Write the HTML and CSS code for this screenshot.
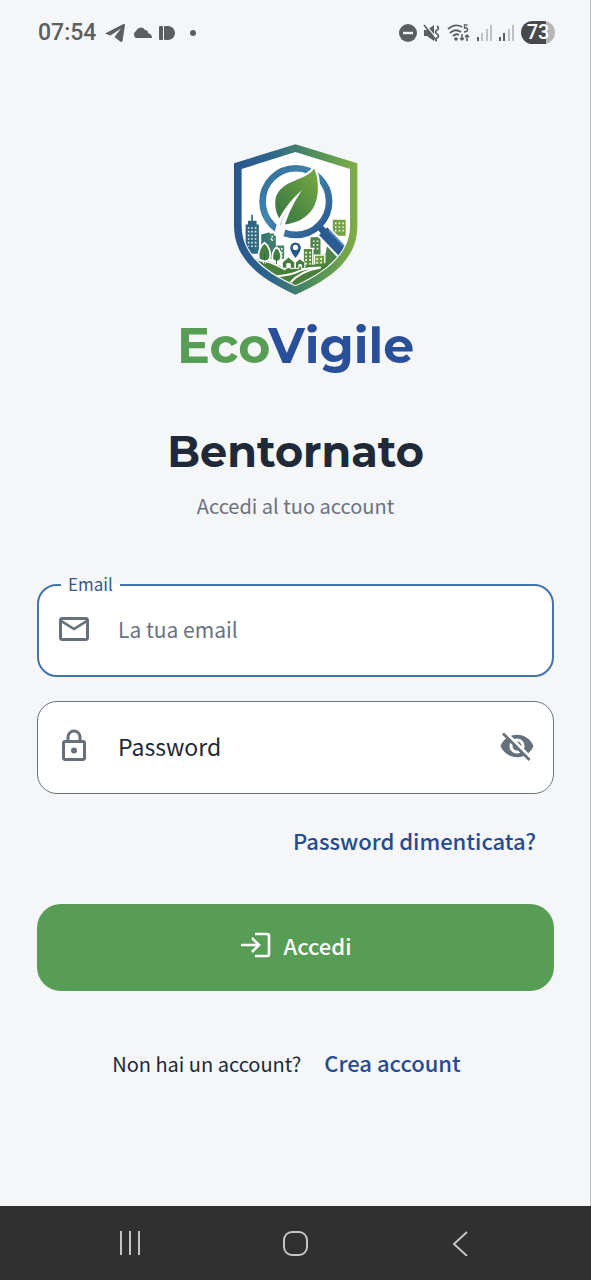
FILE: index.html
```html
<!DOCTYPE html>
<html lang="it">
<head>
    <meta charset="UTF-8">
    <meta name="viewport" content="width=device-width, initial-scale=1.0">
    <title>EcoVigile - Accedi</title>
    <link rel="stylesheet" href="styles.css">
</head>
<body>
    <div class="screen">
        <header class="status-bar">
            <div class="status-left">
                <span class="clock">07:54</span>
                <svg width="20" height="20" viewBox="0 0 20 20"><path d="M0 10.500 18.500 1Q20 .6 20 2L17.500 18Q16.500 20 14.500 18L9.500 14 16 5.500 5.500 12.500Z"/></svg>
                <svg width="20" height="12" viewBox="0 0 20 12"><path d="M4 11a4 4 0 0 1 0-7 5 5 0 0 1 9-1 3 3 0 0 1 3 3q4 1 4 5Z"/></svg>
                <svg width="16" height="14" viewBox="0 0 16 14"><rect width="4" height="14" rx="1"/><path d="M6 0h3a7 7 0 0 1 0 14H6q-1 0-1-1V1q0-1 1-1Z"/></svg>
                <span class="dot"></span>
            </div>
            <div class="status-right">
                <svg width="18" height="18" viewBox="0 0 18 18"><circle cx="9" cy="9" r="9"/><path d="M4 9h10" stroke="#f4f6f8" stroke-width="2.400"/></svg>
                <svg width="18" height="18" viewBox="0 0 18 18"><path d="M1 6h3l7-5v16l-7-5H1Z"/><path d="M2 0l11 14" stroke="#f4f6f8" stroke-width="1.500"/><path d="M1 1l12 15" stroke="#5c5e60" stroke-width="1.600"/><path d="M14 2q3 2 0 4t0 4 0 4 0 3" fill="none" stroke="#5c5e60" stroke-width="1.600"/></svg>
                <svg width="24" height="18" viewBox="0 0 24 18"><path d="M1 5q7-6 14-2M3 9q5-5 11-1M6 12q3-3 6-1" fill="none" stroke="#5c5e60" stroke-width="1.800"/><circle cx="9" cy="15" r="1.800"/><path d="M20.500 1H17.500V4q3-1 3 1.500T17 8" fill="none" stroke="#5c5e60" stroke-width="1.400"/><path d="M15 10v6m-2-2 2 2 2-2M20 17v-6m-2 2 2-2 2 2" fill="none" stroke="#5c5e60" stroke-width="1.500"/></svg>
                <svg width="16" height="17" viewBox="0 0 16 17"><path d="M0 13h2v4H0z"/><path d="M4 9h2v8H4zM9 5h2v12H9zM13 1h2v16h-2z" fill="#bfc0c2"/></svg>
                <svg width="16" height="17" viewBox="0 0 16 17"><path d="M0 13h2v4H0zM4 9h2v8H4z"/><path d="M9 5h2v12H9zM13 1h2v16h-2z" fill="#bfc0c2"/></svg>
                <span class="battery">73</span>
            </div>
        </header>

        <main class="login">
            <!-- Logo -->
            <svg class="logo" viewBox="38 26 374 454" role="img" aria-label="EcoVigile">
                <defs>
                    <linearGradient id="edge" x1="0" y1="0" x2="1" y2="0">
                        <stop offset="0" stop-color="#29558d"/>
                        <stop offset=".3" stop-color="#2d668e"/>
                        <stop offset=".65" stop-color="#4f8f59"/>
                        <stop offset="1" stop-color="#80ad45"/>
                    </linearGradient>
                    <linearGradient id="lens" x1="0" y1="0" x2="1" y2="1">
                        <stop offset="0" stop-color="#326c9c"/>
                        <stop offset=".4" stop-color="#4386ad"/>
                        <stop offset="1" stop-color="#28558f"/>
                    </linearGradient>
                    <linearGradient id="leaf" x1="0" y1="1" x2="1" y2="0">
                        <stop offset="0" stop-color="#327244"/>
                        <stop offset="1" stop-color="#78ab40"/>
                    </linearGradient>
                    <linearGradient id="city" x1="0" y1="0" x2="1" y2="0">
                        <stop offset="0" stop-color="#28618b"/>
                        <stop offset=".3" stop-color="#438066"/>
                        <stop offset="1" stop-color="#78a642"/>
                    </linearGradient>
                    <clipPath id="inside"><path d="M66 104 225 53 386 104V270C386 354 318 408 225 451 130 407 66 354 66 270Z"/></clipPath>
                </defs>
                <path d="M40 84 225 27 411 84V270C411 374 332 431 225 479 118 431 40 372 40 270Z" fill="url(#edge)"/>
                <path d="M63 101 225 50 389 101V270C389 357 320 411 225 454 128 410 63 357 63 270Z" fill="#fff"/>

                <g clip-path="url(#inside)">
                    <!-- Skyline -->
                    <path d="M75 268h7v-11h10v-18h5v18h11v11h7v88H75ZM122 298l25-7v67h-25ZM147 295h19v36h25v40h-44ZM337 254h39v48h-39ZM271 320l7-12h21v58h-28Z" fill="url(#city)"/>
                    <path d="M270 390V306h30v52h15l7-40 45 45-22 45Z" fill="#4d8449"/>
                    <path d="M84 276v58m10-58v66m11-66v66M155 302v20m-5-10h12M346 262v32m11-32v32m11-32v32M280 316v32m11-32v32M174 339v28m10-28v28" fill="none" stroke="#e5efe3" stroke-width="5" stroke-dasharray="5 6"/>
                    <path d="M248 340h29v60h-29Z" fill="#588b3e" stroke="#fff" stroke-width="4"/>
                    <path d="M282 360h31v42h-31Z" fill="#6f9e40" stroke="#fff" stroke-width="4"/>
                    <path d="M257 350v42m12-42v42M290 369v28m12-28v28" stroke="#f2f6e9" stroke-width="5" stroke-dasharray="6 5"/>
                    <!-- Ground -->
                    <path d="M94 371q53 2 99 30 27-4 132-18l-7 31-91 41Q125 410 94 371Z" fill="#487f3b"/>
                    <path d="M185 399v-17l19-16 19 16v18h-14v-14h-10v14ZM225 400v-18l13-11 15 11v18h-10v-11h-8v11Z" fill="#477b3e" stroke="#fff" stroke-width="3"/>
                    <path d="M132 385v-45m36 48v-39" stroke="#fff" stroke-width="9"/>
                    <path d="M132 323c-13 8-21 32-17 46 5 14 29 13 33-1 4-16-4-37-16-45ZM168 336c-10 7-15 27-12 36 5 11 22 10 25-1 3-13-4-29-13-35Z" fill="#467f43" stroke="#fff" stroke-width="5"/>
                    <path d="M132 351v34m36-26v28" stroke="#2f6c42" stroke-width="3"/>
                    <path d="M159 424q52-2 82-18 20-9 60-9-62 11-91 45" fill="none" stroke="#fff" stroke-width="6"/>
                    <path d="M88 374q54-2 107 31" fill="none" stroke="#fff" stroke-width="4"/>

                    <!-- Magnifier -->
                    <path d="m303 283 80 84" stroke="#fff" stroke-width="46"/>
                    <path d="m288 265 24 26" stroke="#28578d" stroke-width="20"/>
                    <path d="m308 288 75 79" stroke="#2b5b93" stroke-width="34"/>
                    <path d="m326 286 48 50" stroke="#5e8fb5" stroke-width="5"/>
                    <circle cx="226" cy="199" r="100" fill="none" stroke="url(#lens)" stroke-width="20"/>
                </g>

                <!-- Leaf -->
                <path d="M281 97C263 140 166 132 162 203q0 34 15 55l-10 38 17 2 8-29C254 279 306 231 290 124Z" fill="#fff" stroke="#fff" stroke-width="12"/>
                <path d="M281 99C262 139 164 132 164 204q0 25 12 45 25-47 68-84-47 53-65 104C257 264 306 220 289 122Z" fill="url(#leaf)"/>
                <path d="M174 296q14-75 70-131-45 67-57 129" fill="#fff"/>
                <path d="M225 372q-18-22-18-34a18 18 0 0 1 36 0q0 12-18 34Z" fill="#28588b" stroke="#fff" stroke-width="4"/>
                <circle cx="225" cy="337" r="8" fill="#fff"/>
            </svg>

            <div class="brand"><span>Eco</span>Vigile</div>
            <h1>Bentornato</h1>
            <p class="subtitle">Accedi al tuo account</p>

            <form class="login-form">
                <div class="field focused">
                    <svg width="36" height="36" viewBox="0 0 24 24"><path d="M22 6c0-1.100-.9-2-2-2H4c-1.100 0-2 .9-2 2v12c0 1.100.9 2 2 2h16c1.100 0 2-.9 2-2V6Zm-2 0-8 5-8-5h16Zm0 12H4V8l8 5 8-5v10Z"/></svg>
                    <label for="email">Email</label>
                    <input type="email" id="email" placeholder="La tua email">
                </div>

                <div class="field">
                    <svg width="36" height="36" viewBox="0 0 24 24"><path d="M18 8h-1V6A5 5 0 0 0 7 6v2H6a2 2 0 0 0-2 2v10c0 1.100.9 2 2 2h12a2 2 0 0 0 2-2V10a2 2 0 0 0-2-2ZM9 6a3 3 0 0 1 6 0v2H9V6Zm9 14H6V10h12v10Zm-6-3a2 2 0 1 0 0-4 2 2 0 0 0 0 4Z"/></svg>
                    <label for="password">Password</label>
                    <input type="password" id="password">
                    <button type="button" class="toggle" aria-label="Mostra password">
                        <svg width="36" height="36" viewBox="0 0 24 24"><path d="M12 7c2.760 0 5 2.240 5 5 0 .65-.13 1.260-.36 1.830l2.920 2.920c1.510-1.260 2.700-2.890 3.430-4.750-1.730-4.390-6-7.500-11-7.500-1.400 0-2.740.25-3.980.7l2.160 2.160C10.740 7.130 11.350 7 12 7zM2 4.270l2.280 2.280.46.46C3.080 8.300 1.780 10.020 1 12c1.730 4.390 6 7.500 11 7.500 1.550 0 3.030-.3 4.380-.84l.42.42L19.730 22 21 20.730 3.270 3 2 4.270zM7.530 9.800l1.550 1.550c-.05.21-.08.43-.08.65 0 1.660 1.340 3 3 3 .22 0 .44-.03.65-.08l1.550 1.550c-.67.33-1.410.53-2.200.53-2.760 0-5-2.240-5-5 0-.79.2-1.530.53-2.200zm4.310-.78 3.150 3.150.02-.16c0-1.660-1.340-3-3-3l-.17.01z"/></svg>
                    </button>
                </div>

                <a href="#" class="forgot">Password dimenticata?</a>

                <button type="submit" class="submit">
                    <svg width="32" height="30" viewBox="0 0 32 30"><path d="M1 15h18m-7-7 7 7-7 7M15 4h12q2 0 2 2v18q0 2-2 2H15" fill="none" stroke="#fff" stroke-width="2.600"/></svg>
                    Accedi
                </button>
            </form>

            <div class="signup">
                <span>Non hai un account?</span>
                <a href="#">Crea account</a>
            </div>
        </main>
    </div>

    <nav class="nav-bar">
        <button aria-label="Recenti"><svg width="24" height="26" viewBox="0 0 24 26"><path d="M2 1v24M11 1v24M20 1v24"/></svg></button>
        <button aria-label="Home"><svg width="26" height="26" viewBox="0 0 26 26"><rect x="1" y="2" width="23" height="23" rx="8"/></svg></button>
        <button aria-label="Indietro"><svg width="24" height="26" viewBox="0 0 24 26"><path d="M18 2 5 14l13 12"/></svg></button>
    </nav>
</body>
</html>
```
FILE: styles.css
```css
* {
    box-sizing: border-box;
}

body {
    margin: 0;
    min-height: 100vh;
    display: flex;
    flex-direction: column;
    font-family: "Noto Sans CJK SC", "Open Sans", sans-serif;
    font-size: 20px;
    line-height: 28px;
    color: #1f2937;
    background-color: #f4f6f8;
}

button,
input {
    font: inherit;
}

button {
    border: none;
    cursor: pointer;
}

a {
    color: #284b8f;
    font-size: 22px;
    font-weight: 500;
    text-decoration: none;
}

svg {
    display: block;
    flex-shrink: 0;
}

.screen {
    flex: 1;
    border-right: 1px solid #b9bbbd;
}

/* Status bar */
.status-bar {
    display: flex;
    justify-content: space-between;
    align-items: center;
    height: 65px;
    padding: 0 35px 0 38px;
    fill: #5c5e60;
}

.status-left,
.status-right {
    display: flex;
    align-items: center;
    gap: 7px;
}

.status-right {
    gap: 6px;
}

.clock {
    margin-right: 2px;
    font-family: Roboto, sans-serif;
    font-size: 23px;
    font-weight: 500;
    color: #5c5e60;
}

.dot {
    width: 6px;
    height: 6px;
    margin-left: 8px;
    border-radius: 50%;
    background-color: #5c5e60;
}

.battery {
    width: 34px;
    height: 23px;
    border-radius: 12px;
    background: linear-gradient(to right, #48494b 73%, #b5b6b8 73%);
    color: #fff;
    font-family: Roboto, sans-serif;
    font-size: 20px;
    font-weight: 500;
    line-height: 23px;
    text-align: center;
}

/* Login */
.login {
    display: flex;
    flex-direction: column;
    align-items: center;
    padding: 79px 36px 40px 37px;
}

.logo {
    width: 125px;
    height: 151px;
}

.brand,
h1 {
    font-family: Montserrat, Inter, sans-serif;
    font-weight: 700;
    line-height: 60px;
}

.brand {
    margin-top: 21px;
    font-size: 49px;
    color: #2a4f9a;
}

.brand span {
    color: #579d55;
}

h1 {
    margin: 46px 0 10px;
    font-size: 43px;
}

.subtitle {
    margin: 0;
    color: #6b7280;
}

.login-form {
    display: flex;
    flex-direction: column;
    width: 100%;
    margin-top: 64px;
}

.field {
    position: relative;
    display: grid;
    grid-template-columns: 36px 1fr auto;
    align-items: center;
    column-gap: 26px;
    height: 93px;
    margin-bottom: 24px;
    padding: 0 18px 3px;
    border: 1px solid #6b7280;
    border-radius: 20px;
    background-color: #fff;
    fill: #66707b;
}

.field label,
.field input {
    grid-row: 1;
    grid-column: 2;
}

.field label {
    font-size: 23px;
    pointer-events: none;
    z-index: 1;
}

.field input {
    width: 100%;
    padding: 0;
    border: none;
    outline: none;
    background: none;
}

.field input::placeholder {
    color: #6b7280;
    opacity: 1;
}

.field.focused {
    padding: 0 17px 3px;
    border: 2px solid #4275ac;
}

.field.focused input {
    font-size: 21px;
}

/* Label that sits on the border of the focused field */
.field.focused label {
    position: absolute;
    grid-area: auto;
    top: -16px;
    left: 22px;
    padding: 0 7px;
    font-size: 17px;
    color: #3b5788;
    background: linear-gradient(#f4f6f8 50%, #fff 50%);
}

.toggle {
    padding: 0;
    background: none;
}

.forgot {
    align-self: flex-end;
    margin: 8px 18px 50px 0;
}

.submit {
    display: flex;
    justify-content: center;
    align-items: center;
    gap: 12px;
    height: 87px;
    padding: 0 0 5px;
    border-radius: 24px;
    background-color: #579d55;
    color: #fff;
    font-size: 22px;
    font-weight: 500;
}

.signup {
    display: flex;
    align-items: baseline;
    gap: 23px;
    margin: 57px 18px 0 0;
}

/* System navigation */
.nav-bar {
    display: flex;
    justify-content: center;
    gap: 117px;
    height: 74px;
    background-color: #303030;
}

.nav-bar button {
    display: flex;
    justify-content: center;
    align-items: center;
    width: 48px;
    padding: 0;
    background: none;
}

.nav-bar svg {
    fill: none;
    stroke: #c4c4c4;
    stroke-width: 2;
}
```
